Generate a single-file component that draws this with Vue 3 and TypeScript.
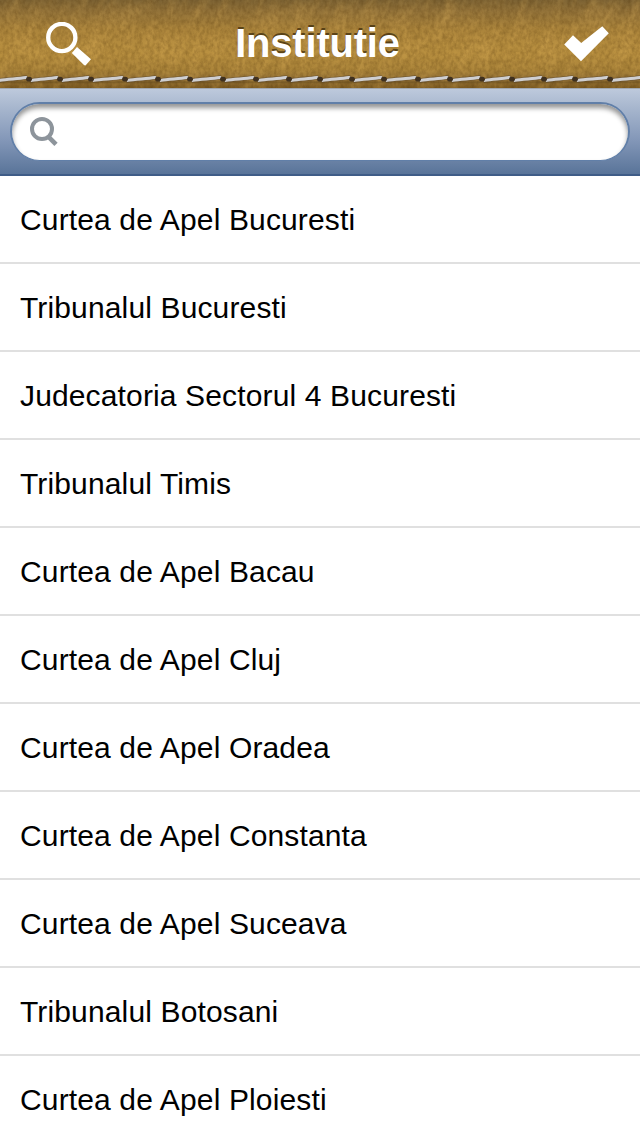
<script setup lang="ts">
interface Court {
  name: string
}

const courts: Court[] = [
  { name: 'Curtea de Apel Bucuresti' },
  { name: 'Tribunalul Bucuresti' },
  { name: 'Judecatoria Sectorul 4 Bucuresti' },
  { name: 'Tribunalul Timis' },
  { name: 'Curtea de Apel Bacau' },
  { name: 'Curtea de Apel Cluj' },
  { name: 'Curtea de Apel Oradea' },
  { name: 'Curtea de Apel Constanta' },
  { name: 'Curtea de Apel Suceava' },
  { name: 'Tribunalul Botosani' },
  { name: 'Curtea de Apel Ploiesti' },
]

// Needle holes along the seam; a thread runs from each one to the next.
const holes: number[] = [-3, 29, 60, 91, 125, 158, 190, 223, 256, 289, 320, 352, 384, 418, 450, 482, 512, 544, 575, 610, 643]
const threads = holes.slice(0, -1).map((x, i) => {
  const end = holes[i + 1]
  return `M${x + 3} 80.4 C${x + 10} 79 ${end - 12} 79 ${end - 3} 77.6`
})
</script>

<template>
  <main class="screen">
    <header class="bar">
      <svg class="leather" width="640" height="88" viewBox="0 0 640 88" aria-hidden="true">
        <defs>
          <linearGradient id="hide" x1="0" y1="0" x2="0" y2="1">
            <stop offset="0" stop-color="#7b6233" />
            <stop offset="0.12" stop-color="#927239" />
            <stop offset="0.35" stop-color="#ac853b" />
            <stop offset="0.6" stop-color="#b88f3f" />
            <stop offset="0.8" stop-color="#a88238" />
            <stop offset="0.9" stop-color="#957236" />
            <stop offset="1" stop-color="#7b591f" />
          </linearGradient>
          <filter id="grain" x="0" y="0" width="100%" height="100%" color-interpolation-filters="sRGB">
            <feTurbulence type="fractalNoise" baseFrequency="0.28 0.2" numOctaves="3" seed="12" />
            <feColorMatrix type="matrix" values="0 0 0 0 0.3  0 0 0 0 0.19  0 0 0 0 0.03  0.5 0 0 0 -0.16" />
          </filter>
          <filter id="crease" x="0" y="0" width="100%" height="100%" color-interpolation-filters="sRGB">
            <feTurbulence type="fractalNoise" baseFrequency="0.09 0.03" numOctaves="3" seed="5" />
            <feColorMatrix type="matrix" values="0 0 0 0 0.88  0 0 0 0 0.7  0 0 0 0 0.36  0 0.6 0 0 -0.23" />
          </filter>
        </defs>
        <rect width="640" height="88" fill="url(#hide)" />
        <g transform="skewX(-18)">
          <rect width="700" height="88" filter="url(#crease)" />
        </g>
        <rect width="640" height="88" filter="url(#grain)" />
        <path d="M0 82.2H640" stroke="#4f3a14" stroke-opacity="0.3" stroke-width="2" />
        <g fill="none" stroke-linecap="round">
          <path v-for="d in threads" :key="'s' + d" :d="d" stroke="#5a4730" stroke-width="4.6" stroke-opacity="0.55" />
          <path v-for="d in threads" :key="d" :d="d" stroke="#cfcfd2" stroke-width="3" />
        </g>
        <g fill="#3f301f">
          <ellipse v-for="x in holes" :key="x" :cx="x" cy="79.2" rx="2.9" ry="2.4" />
        </g>
      </svg>
      <svg class="icon" width="46" height="44" viewBox="0 0 46 44" role="img" aria-label="Cauta">
        <circle cx="15.8" cy="15.5" r="13.6" fill="none" stroke="#fff" stroke-width="4.3" />
        <path d="M31 25.1 L45 37.2 L39.7 43.3 Q38.7 43.6 37.7 42.8 L25.8 31 Z" fill="#fff" />
      </svg>
      <h1 class="title">Institutie</h1>
      <svg class="icon" width="46" height="36" viewBox="0 0 46 36" role="img" aria-label="Gata">
        <path d="M1.2 18.4 L10 9.3 L18.2 17 L39.3 0.2 L45.8 7.2 L18 35.3 Z" fill="#fff" />
      </svg>
    </header>
    <div class="search">
      <label class="field">
        <svg width="30" height="32" viewBox="0 0 30 32" aria-hidden="true">
          <path d="M19.3 20.7 L27 28.3" stroke="#8d949b" stroke-width="4.6" />
          <circle cx="13" cy="13" r="10" fill="none" stroke="#8d949b" stroke-width="4" />
        </svg>
        <input type="text" aria-label="Cautare" />
      </label>
    </div>
    <ul class="list">
      <li v-for="court in courts" :key="court.name" class="row">{{ court.name }}</li>
    </ul>
  </main>
</template>

<style>
body {
  margin: 0;
  overflow: hidden;
}
</style>

<style scoped>
.screen {
  width: 640px;
  height: 1136px;
  overflow: hidden;
  background: #fff;
  font-family: "Liberation Sans", Arial, sans-serif;
}
.bar {
  position: relative;
  display: flex;
  align-items: center;
  box-sizing: border-box;
  height: 88px;
  padding: 0 31px 0 46px;
}
.leather {
  position: absolute;
  inset: 0;
}
.icon,
.title {
  position: relative;
}
.title {
  flex: 1;
  margin: 0;
  padding: 0 20px 2px 0;
  color: #fff;
  font-size: 40px;
  letter-spacing: -0.2px;
  line-height: 46px;
  text-align: center;
  text-shadow: 0 -2px 0 rgba(65, 46, 12, 0.75);
}
.search {
  box-sizing: border-box;
  height: 88px;
  padding: 13px 10px 0;
  border-top: 1px solid #a2a8b2;
  border-bottom: 2px solid #3f5c87;
  background: linear-gradient(#bdc9dc, #a9b8cf 20%, #8397b8 60%, #597499);
}
.field {
  display: flex;
  align-items: center;
  box-sizing: border-box;
  height: 59px;
  padding: 0 20px 1px 17px;
  border: 2px solid #617fa8;
  border-bottom-width: 1px;
  border-radius: 30px;
  background: #fff;
  box-shadow: inset 0 4px 5px rgba(0, 0, 0, 0.42);
}
.field input {
  flex: 1;
  min-width: 0;
  border: 0;
  outline: 0;
  background: transparent;
  font: inherit;
}
.list {
  margin: 0;
  padding: 0;
  list-style: none;
}
.row {
  box-sizing: border-box;
  height: 88px;
  padding-left: 20px;
  border-bottom: 2px solid #e0e0e0;
  color: #000;
  font-size: 30px;
  letter-spacing: 0.14px;
  line-height: 88px;
  white-space: nowrap;
}
</style>
